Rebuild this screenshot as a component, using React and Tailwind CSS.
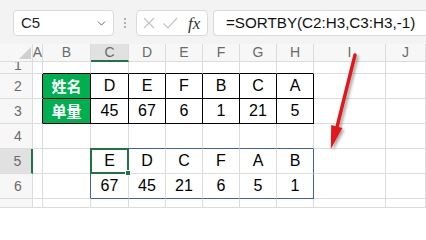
import React from "react";
import { ChevronDown } from "lucide-react";

const COLS = ["A", "B", "C", "D", "E", "F", "G", "H", "I", "J"];
const ROWS = [1, 2, 3, 4, 5, 6, 7];

// cell values keyed by row, then column index
const DATA = {
  2: { 1: "姓名", 2: "D", 3: "E", 4: "F", 5: "B", 6: "C", 7: "A" },
  3: { 1: "单量", 2: "45", 3: "67", 4: "6", 5: "1", 6: "21", 7: "5" },
  5: { 2: "E", 3: "D", 4: "C", 5: "F", 6: "A", 7: "B" },
  6: { 2: "67", 3: "45", 4: "21", 5: "6", 6: "5", 7: "1" },
};

const inBlack = (r, c) => r >= 2 && r <= 3 && c >= 1 && c <= 7;
const inBlue = (r, c) => r >= 5 && r <= 6 && c >= 2 && c <= 7;

const cellBorders = (r, c) => {
  let right = "border-r border-r-[#dcdcdc]";
  let bottom = "border-b border-b-[#dcdcdc]";
  if (inBlack(r, c) || ((r === 2 || r === 3) && c === 0)) right = "border-r-[1.5px] border-r-black";
  if (inBlack(r, c) || (r === 1 && c >= 1 && c <= 7)) bottom = "border-b-[1.5px] border-b-black";
  if ((inBlue(r, c) && c === 7) || ((r === 5 || r === 6) && c === 1)) right = "border-r border-r-[#3f62a8]";
  if ((inBlue(r, c) && r === 6) || (r === 4 && c >= 2 && c <= 7)) bottom = "border-b border-b-[#3f62a8]";
  return `${right} ${bottom}`;
};

const Toolbar = () => (
  <div className="h-[44px] bg-[#f3f3f3] flex items-start pt-[10px] pl-[13px]">
    <div className="w-[101px] h-[26px] bg-white border border-[#dadada] rounded-[4px] flex items-center justify-between pl-[7px] pr-[5px]">
      <span className="text-[15px] text-[#222]">C5</span>
      <ChevronDown size={13} strokeWidth={1.6} className="text-[#555]" />
    </div>
    <div className="w-[22px] h-[26px] flex flex-col items-center justify-center gap-[2px]">
      <span className="w-[2px] h-[2px] rounded-full bg-[#9a9a9a]" />
      <span className="w-[2px] h-[2px] rounded-full bg-[#9a9a9a]" />
      <span className="w-[2px] h-[2px] rounded-full bg-[#9a9a9a]" />
    </div>
    <div className="w-[72px] h-[26px] bg-white border border-[#dadada] rounded-[4px] flex items-center pl-[4px] gap-[6px]">
      <svg width="14" height="14" viewBox="0 0 14 14" className="ml-[1px]">
        <path d="M2 2 L12 12 M12 2 L2 12" stroke="#c4c4c4" strokeWidth="1.2" fill="none" />
      </svg>
      <svg width="16" height="14" viewBox="0 0 16 14">
        <path d="M1.5 7.5 L6 12 L15 2" stroke="#c4c4c4" strokeWidth="1.2" fill="none" />
      </svg>
      <span className="font-['Liberation_Serif',serif] italic text-[17px] text-[#333] leading-none ml-[4px]">fx</span>
    </div>
    <div className="ml-[5px] flex-1 h-[26px] bg-white border border-r-0 border-[#dadada] rounded-l-[4px] flex items-center pl-[12px]">
      <span className="text-[15.2px] text-[#111] whitespace-nowrap">=SORTBY(C2:H3,C3:H3,-1)</span>
    </div>
  </div>
);

const HeaderRow = () => (
  <>
    <div className="bg-[#f7f7f7] border-r border-b border-[#dcdcdc] relative">
      <svg width="12" height="12" viewBox="0 0 12 12" className="absolute right-[1px] bottom-[2px]">
        <polygon points="12,0 12,12 0,12" fill="#d0d0d0" />
      </svg>
    </div>
    {COLS.map((col) => (
      <div
        key={col}
        className={`flex items-center justify-center text-[14px] text-[#6a6a6a] border-r border-[#dcdcdc] ${
          col === "C" ? "bg-[#e1e1e1] border-b-2 border-b-[#217346]" : "bg-[#f7f7f7] border-b"
        }`}
      >
        {col}
      </div>
    ))}
  </>
);

const RowHeader = ({ r }) => (
  <div
    className={`overflow-hidden border-b border-[#dcdcdc] text-[14px] text-[#6a6a6a] ${
      r === 5 ? "bg-[#e1e1e1] border-r-2 border-r-[#217346]" : "bg-[#f7f7f7] border-r"
    }`}
  >
    {r < 7 && (
      <div className={`h-[25px] flex items-center justify-center pl-[4px] ${r === 1 ? "-mt-[9px]" : ""}`}>{r}</div>
    )}
  </div>
);

const Cell = ({ r, c }) => {
  const value = DATA[r] && DATA[r][c];
  const green = c === 1 && (r === 2 || r === 3);
  return (
    <div
      className={`relative flex items-center justify-center ${cellBorders(r, c)} ${
        green
          ? "bg-[#00b050] text-white font-bold text-[15px] font-['Noto_Sans_CJK_SC',sans-serif]"
          : "bg-white text-[16px] text-black"
      }`}
    >
      {value}
      {r === 5 && c === 2 && (
        <div className="absolute -left-px -top-px -right-px -bottom-px border-2 border-[#217346] z-10">
          <div className="absolute -right-[4px] -bottom-[4px] w-[6px] h-[6px] bg-[#217346] border border-white" />
        </div>
      )}
    </div>
  );
};

const Arrow = () => (
  <svg className="absolute left-0 top-0 pointer-events-none z-20" width="426" height="208" viewBox="0 0 426 208">
    <defs>
      <filter id="sh" x="-50%" y="-50%" width="200%" height="200%">
        <feDropShadow dx="2" dy="2" stdDeviation="1.6" floodColor="#000" floodOpacity="0.35" />
      </filter>
    </defs>
    <g filter="url(#sh)">
      <line x1="355" y1="55" x2="337" y2="127" stroke="#e3161c" strokeWidth="3.4" strokeLinecap="round" />
      <polygon points="330.8,149 331.2,125 342.4,128" fill="#e3161c" />
    </g>
  </svg>
);

export default function App() {
  return (
    <div className="relative w-[426px] h-[208px] overflow-hidden bg-white font-['Liberation_Sans','Noto_Sans_CJK_SC',sans-serif]">
      <Toolbar />
      <div className="grid grid-cols-[33px_10px_48px_38px_37px_37px_37px_37px_37px_72px_1fr] grid-rows-[18px_12px_25px_25px_25px_25px_25px_1fr] h-[164px]">
        <HeaderRow />
        {ROWS.map((r) => (
          <React.Fragment key={r}>
            <RowHeader r={r} />
            {COLS.map((col, c) => (
              <Cell key={col} r={r} c={c} />
            ))}
          </React.Fragment>
        ))}
      </div>
      <Arrow />
    </div>
  );
}
